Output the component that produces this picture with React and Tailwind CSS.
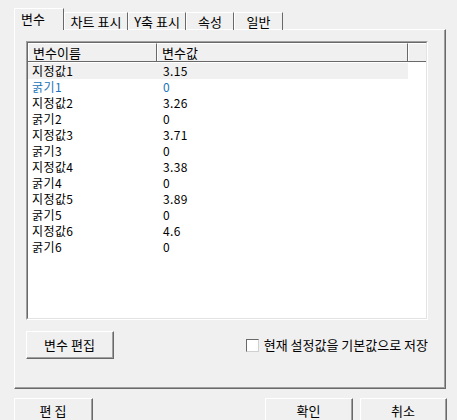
import React from "react";

const rows = [
  ["지정값1", "3.15"],
  ["굵기1", "0"],
  ["지정값2", "3.26"],
  ["굵기2", "0"],
  ["지정값3", "3.71"],
  ["굵기3", "0"],
  ["지정값4", "3.38"],
  ["굵기4", "0"],
  ["지정값5", "3.89"],
  ["굵기5", "0"],
  ["지정값6", "4.6"],
  ["굵기6", "0"],
];

const font = { fontFamily: '"Noto Sans CJK KR", "Noto Sans", sans-serif' };

function Tab({ label, w }) {
  return (
    <div
      className={`${w} h-[18px] border-t border-l border-r border-t-white border-l-white border-r-[#696969] flex items-center justify-center text-[13px] leading-[16px] text-black`}
    >
      {label}
    </div>
  );
}

function Btn({ children, w, h = "h-[28px]" }) {
  return (
    <div className={`${w} ${h} border border-t-white border-l-white border-r-[#696969] border-b-[#696969] bg-[#f0f0f0] flex`}>
      <div className="flex-1 border-r border-b border-r-[#a0a0a0] border-b-[#a0a0a0] flex items-center justify-center text-[13px] leading-[16px] text-black">
        {children}
      </div>
    </div>
  );
}

export default function App() {
  return (
    <div className="w-[457px] h-[420px] bg-[#f0f0f0] overflow-hidden" style={font}>
      {/* tabs */}
      <div className="pl-[14px] pt-[8px] flex items-end relative z-10 -mb-px">
        <div className="w-[50px] h-[22px] bg-[#f0f0f0] border-t border-l border-r border-t-white border-l-white border-r-[#696969] flex items-start pl-[6px] pt-[2px] text-[13px] leading-[16px] text-black">
          변수
        </div>
        <Tab label="차트 표시" w="w-[64px]" />
        <Tab label="Y축 표시" w="w-[58px]" />
        <Tab label="속성" w="w-[48px]" />
        <Tab label="일반" w="w-[49px]" />
      </div>

      {/* panel */}
      <div className="ml-[14px] w-[432px] h-[360px] border border-t-white border-l-white border-r-[#696969] border-b-[#696969] flex flex-col">
        <div className="flex-1 border-r border-b border-r-[#a0a0a0] border-b-[#a0a0a0] pl-[11px] pt-[11px] flex flex-col">
          {/* list */}
          <div className="w-[402px] h-[279px] border border-t-[#a0a0a0] border-l-[#a0a0a0] border-r-white border-b-white flex">
            <div className="flex-1 border border-t-[#696969] border-l-[#696969] border-r-[#e3e3e3] border-b-[#e3e3e3] bg-white flex flex-col">
              <div className="flex h-[19px] bg-[#f0f0f0] border-b border-b-[#696969]">
                <div className="w-[129px] border-t border-l border-r border-t-white border-l-white border-r-[#696969] pl-[4px] text-[13px] leading-[17px] text-black">
                  변수이름
                </div>
                <div className="w-[251px] border-t border-l border-r border-t-white border-l-white border-r-[#696969] pl-[4px] text-[13px] leading-[17px] text-black">
                  변수값
                </div>
                <div className="flex-1 border-t border-l border-t-white border-l-white" />
              </div>
              <div className="flex flex-col pt-px">
                {rows.map(([a, b], i) => (
                  <div
                    key={i}
                    className={`flex w-[380px] h-[16px] text-[12px] leading-[16px] tracking-[0.4px] ${i === 0 ? "bg-[#f0f0f0]" : ""} ${i === 1 ? "text-[#1a73b8]" : "text-black"}`}
                  >
                    <div className="w-[130px] pl-[4px]">{a}</div>
                    <div className="flex-1 pl-[5px]">{b}</div>
                  </div>
                ))}
              </div>
            </div>
          </div>

          {/* bottom controls */}
          <div className="flex items-center mt-[11px] w-[402px]">
            <Btn w="w-[88px]">변수 편집</Btn>
            <div className="ml-auto flex items-center">
              <div className="w-[13px] h-[13px] bg-white border border-t-[#696969] border-l-[#696969] border-r-[#d0d0d0] border-b-[#d0d0d0]" />
              <span className="ml-[5px] text-[13px] leading-[16px] text-black">현재 설정값을 기본값으로 저장</span>
            </div>
          </div>
        </div>
      </div>

      {/* bottom buttons */}
      <div className="flex mt-[9px] pl-[14px]">
        <Btn w="w-[79px]" h="h-[26px]">편 집</Btn>
        <div className="ml-[172px]">
          <Btn w="w-[88px]" h="h-[26px]">확인</Btn>
        </div>
        <div className="ml-[7px]">
          <Btn w="w-[87px]" h="h-[26px]">취소</Btn>
        </div>
      </div>
    </div>
  );
}
